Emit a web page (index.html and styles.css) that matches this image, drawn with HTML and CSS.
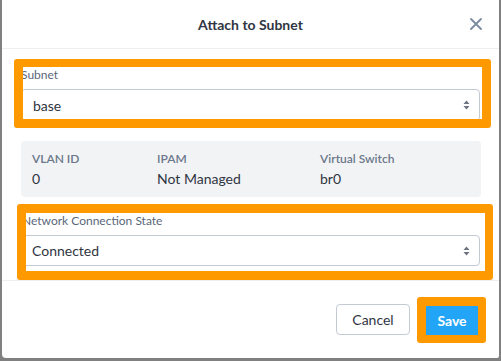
FILE: index.html
```html
<!DOCTYPE html>
<html>
<head>
<meta charset="utf-8">
<link rel="stylesheet" href="styles.css">
</head>
<body>
<div class="modal">
  <div class="modal-header">
    <div class="title">Attach to Subnet</div>
    <span class="close" aria-label="Close">
      <svg width="12" height="12" viewBox="0 0 12 12"><path d="M1 1L11 11M11 1L1 11" stroke="#7b8aa0" stroke-width="1.8" stroke-linecap="round"/></svg>
    </span>
  </div>
  <div class="modal-body">
    <div class="hl hl-subnet">
      <div class="field field-subnet">
        <div class="field-label">Subnet</div>
        <div class="select pad-a">
          <span>base</span>
          <svg class="caret" width="7" height="10" viewBox="0 0 7 10"><path d="M3.5 0.5L6.5 4H0.5Z M3.5 9.5L6.5 6H0.5Z" fill="#6b7280"/></svg>
        </div>
      </div>
    </div>
    <div class="info">
      <div class="info-col">
        <div class="info-label">VLAN ID</div>
        <div class="info-value">0</div>
      </div>
      <div class="info-col">
        <div class="info-label">IPAM</div>
        <div class="info-value">Not Managed</div>
      </div>
      <div class="info-col">
        <div class="info-label">Virtual Switch</div>
        <div class="info-value">br0</div>
      </div>
    </div>
    <div class="hl hl-state">
      <div class="field field-state">
        <div class="field-label">Network Connection State</div>
        <div class="select pad-b">
          <span>Connected</span>
          <svg class="caret" width="7" height="10" viewBox="0 0 7 10"><path d="M3.5 0.5L6.5 4H0.5Z M3.5 9.5L6.5 6H0.5Z" fill="#6b7280"/></svg>
        </div>
      </div>
    </div>
  </div>
  <div class="modal-footer">
    <button class="btn btn-cancel">Cancel</button>
    <span class="hl-btn"><button class="btn btn-save">Save</button></span>
  </div>
</div>
</body>
</html>
```
FILE: styles.css
```css
html, body {
  margin: 0;
  padding: 0;
}
body {
  background: #808080;
  width: 501px;
  height: 361px;
  overflow: hidden;
  font-family: Lato, "Open Sans", sans-serif;
  color: #2f3542;
}
.modal {
  margin-left: 2px;
  width: 497px;
  height: 358px;
  background: #fff;
  border-bottom-left-radius: 4px;
  border-bottom-right-radius: 2px;
  display: flex;
  flex-direction: column;
}
.modal-header {
  height: 48px;
  border-bottom: 1px solid #eceef1;
  display: flex;
  align-items: center;
  justify-content: center;
  position: relative;
}
.title {
  font-size: 14px;
  font-weight: 700;
  color: #2f3542;
}
.close {
  position: absolute;
  right: 17px;
  top: 18px;
  width: 12px;
  height: 12px;
  display: flex;
}
.modal-body {
  display: flex;
  flex-direction: column;
  height: 231px;
  border-bottom: 1px solid #eceef1;
}
.hl {
  border: 9px solid #ff9900;
  border-radius: 3px;
  overflow: hidden;
  box-sizing: border-box;
}
.hl-subnet {
  margin: 10px 0 0 12px;
  width: 477px;
  height: 69px;
  border-width: 8px 9px 9px 9px;
}
.hl-state {
  margin: 7px 0 0 15px;
  width: 476px;
  height: 76px;
  border-width: 9px 8px 9px 9px;
}
.field {
  display: flex;
  flex-direction: column;
  gap: 6px;
}
.field-subnet {
  margin: 0 2px 0 -2px;
}
.field-state {
  margin: 0 5px 0 -4px;
}
.field-label {
  font-size: 12px;
  line-height: 16px;
  color: #5a677a;
}
.select {
  height: 31px;
  border: 1px solid #c4cad4;
  border-radius: 4px;
  display: flex;
  align-items: center;
  justify-content: space-between;
  padding-right: 9px;
  font-size: 14px;
  color: #2f3542;
  flex-shrink: 0;
  box-sizing: border-box;
}
.select.pad-a {
  height: 32px;
  padding-left: 11px;
}
.pad-b {
  padding-left: 9px;
}
.info {
  margin: 13px 0 0 19px;
  width: 460px;
  height: 56px;
  box-sizing: border-box;
  background: #f2f3f5;
  border-radius: 4px;
  padding: 11px 11px 0 11px;
  display: grid;
  grid-template-columns: 125px 163px 1fr;
}
.info-label {
  font-size: 12px;
  line-height: 14px;
  font-weight: 600;
  color: #6b788b;
}
.info-value {
  margin-top: 5px;
  font-size: 14px;
  line-height: 16px;
  color: #2f3542;
}
.modal-footer {
  flex: 1;
  display: flex;
  align-items: center;
  justify-content: flex-end;
  padding-right: 13px;
  gap: 7px;
}
.btn {
  font-family: Lato, "Open Sans", sans-serif;
  font-size: 14px;
  border-radius: 4px;
  box-sizing: border-box;
  cursor: pointer;
}
.btn-cancel {
  width: 74px;
  height: 31px;
  background: #fff;
  border: 1px solid #c4cad4;
  color: #2f3542;
  padding: 0;
}
.hl-btn {
  display: flex;
  border: 9px solid #ff9900;
  border-width: 9px 8px 8px 9px;
  border-radius: 3px;
}
.btn-save {
  width: 52px;
  height: 29px;
  background: #22a5f7;
  border: none;
  border-radius: 0;
  color: #fff;
  font-weight: 700;
  padding: 0;
}
```
